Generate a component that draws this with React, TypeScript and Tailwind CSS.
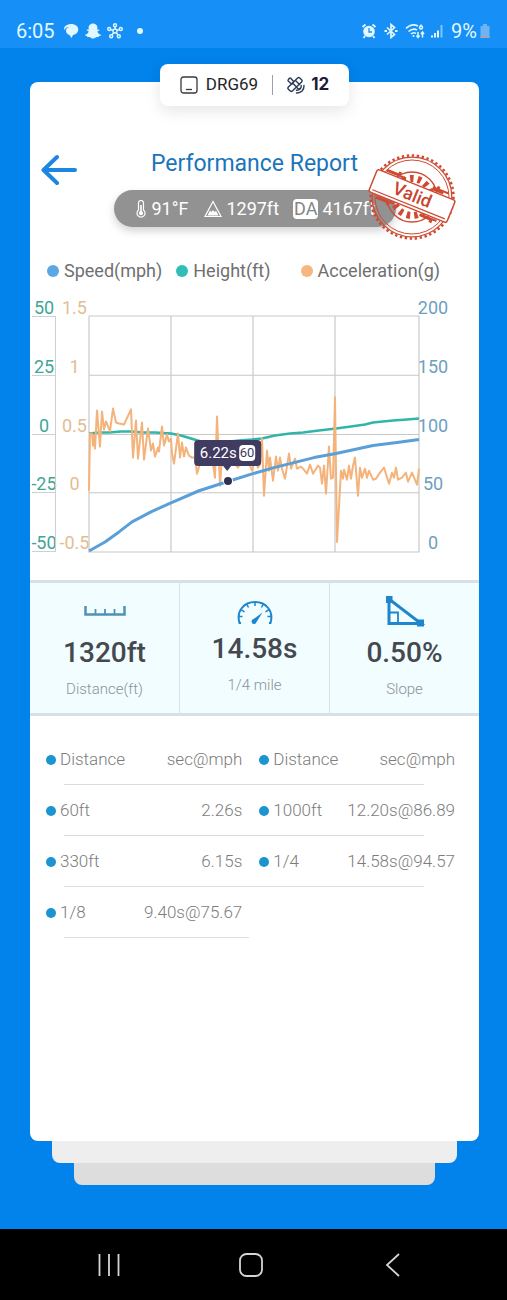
import type { ReactNode } from 'react';
import { FaSnapchatGhost } from 'react-icons/fa';

const speed = '0,234 16,225 30,215 43,205 62,195 82,186 110,174 138,165 164,157 185,151 201,147 225,141 247,137 284,129 308,126 330,123';

const height =
  '0,117 10,116 20,116 32,115 42,115 54,116 66,116 82,117 92,119 102,122 112,125 122,127 150,124 163,123 173,122 186,119 201,117 214,116 230,114 247,112 262,110 276,108 284,106 304,104 318,103 330,102';

const acceleration =
  '0,174 1,117 3,117 4,129 5,119 6,132 8,94 11,130 13,95 15,113 17,105 21,115 24,92 27,106 30,107 35,108 42,93 44,141 47,104 49,142 53,106 55,143 59,112 62,134 64,127 66,140 69,131 70,135 73,110 75,129 78,118 80,125 82,122 83,137 85,147 89,117 91,141 93,126 95,140 97,131 100,139 103,141 106,141 108,157 111,147 118,144 123,141 126,161 128,100 131,169 133,141 143,144 149,151 154,141 159,144 163,154 166,142 169,151 171,147 173,122 175,179 178,134 180,154 181,141 184,164 187,140 189,154 191,141 193,152 196,162 200,137 202,152 206,142 208,152 212,150 214,152 218,157 221,148 224,157 229,149 231,151 233,167 235,149 237,177 240,130 242,162 244,161 246,81 248,225 252,154 254,162 255,153 258,163 260,149 262,162 264,149 266,141 269,179 271,151 273,161 276,152 278,161 280,154 284,163 287,162 291,156 295,151 300,167 303,156 305,161 307,151 309,163 313,161 317,156 319,165 323,156 328,168 330,152';

const legend = [
  { label: 'Speed(mph)', dot: 'bg-[#5ba7e3]', spacing: 'mr-3.5' },
  { label: 'Height(ft)', dot: 'bg-[#31bdb8]', spacing: 'mr-[30px]' },
  { label: 'Acceleration(g)', dot: 'bg-[#f6b67e]', spacing: '' },
];

const splits = [
  ['60ft', '2.26s', '1000ft', '12.20s@86.89'],
  ['330ft', '6.15s', '1/4', '14.58s@94.57'],
  ['1/8', '9.40s@75.67', '', ''],
];

function StatusBar() {
  return (
    <header className="flex h-12 items-center justify-between bg-[#1690f6] pt-3.5 pr-4 pl-4 text-[#e2f8ff]">
      <div className="flex items-center gap-1.5">
        <span className="mr-0.5 text-xl">6:05</span>
        <svg className="h-4 w-4" viewBox="0 0 16 16" fill="currentColor">
          <path d="M4 2c3-1.500 7-1.200 9.500.8 2.600 2.200 2.200 6.200-.5 8-1 .7-2 1-3 1.200L8.500 15 6.500 12C4 11.500 3 9.500 3 7.500c0-2 1.500-3.500 4-3.800C4.500 3.500 2.500 4.500 1.800 7 .2 5.500 1.500 3 4 2z" />
        </svg>
        <FaSnapchatGhost className="h-4 w-4" />
        <svg className="h-4 w-4" viewBox="0 0 16 16" fill="none" stroke="currentColor" strokeWidth="1.400">
          <circle cx="8" cy="8" r="2" />
          <circle cx="8" cy="2.200" r="1.500" />
          <circle cx="2.200" cy="6" r="1.500" />
          <circle cx="13.800" cy="6" r="1.500" />
          <circle cx="4.200" cy="13.300" r="1.500" />
          <circle cx="11.800" cy="13.300" r="1.500" />
          <path d="M8 3.500V6M3.500 6.500l2.600.8M12.500 6.500l-2.600.8M5 12l1.800-2.400M11 12L9.200 9.600" />
        </svg>
        <span className="ml-2 h-1.5 w-1.5 rounded-full bg-current" />
      </div>
      <div className="flex items-center gap-1.5">
        <svg className="h-4 w-4" viewBox="0 0 16 16">
          <circle cx="8" cy="8.500" r="5.800" fill="currentColor" />
          <path d="M1.500 4l3-2.500M14.500 4l-3-2.500M4 13l-1.500 1.800M12 13l1.500 1.800" stroke="currentColor" strokeWidth="1.800" />
          <path d="M8 5v4h3" fill="none" stroke="#1690f6" strokeWidth="1.300" />
        </svg>
        <svg className="h-4 w-4" viewBox="0 0 16 16" fill="none" stroke="currentColor" strokeWidth="1.700">
          <path d="M4 4.500l7.500 7L8 14.500v-13l3.500 3L4 11.500" />
          <path d="M1.500 8h2.500M12 8h2.500" strokeWidth="2" />
        </svg>
        <svg className="h-4 w-5" viewBox="0 0 20 16" fill="none" stroke="currentColor" strokeWidth="1.500">
          <path d="M1 5.500c4-4 8-4.500 12-2.500M3.500 8.500c3-2.500 6-3 8.500-1.500M6 11c1.500-1.500 3.500-1.500 5-.5" />
          <circle cx="8.500" cy="13" r="1" fill="currentColor" stroke="none" />
          <circle cx="16" cy="4.500" r="1.500" />
          <path d="M16 1.500v2M13 9v5M11.500 12.500L13 14.500l1.500-2M17.500 14.500V9.500M16 11l1.500-2 1.500 2" />
        </svg>
        <svg className="h-4 w-3" viewBox="0 0 12 16" stroke="currentColor" strokeWidth="2">
          <path d="M1 14.500v-2M4 14.500v-4.500M7 14.500v-7" />
          <path d="M10.500 14.500V2" opacity=".5" />
        </svg>
        <div className="ml-0.5 flex items-center gap-0.5">
          <span className="text-xl">9%</span>
          <svg className="h-4 w-3" viewBox="0 0 12 16">
            <path d="M1.500 3H4V1h4v2h2.500v12h-9z" fill="#6db4f0" />
            <path d="M1.500 13h9v2h-9z" fill="#a5a0bb" />
          </svg>
        </div>
      </div>
    </header>
  );
}

function DeviceTag() {
  return (
    <div className="relative z-10 -mb-6 flex h-[42px] items-center self-center rounded-lg bg-white px-5 text-[17px] text-[#252528] shadow-[0_5px_16px_rgba(0,0,0,0.10)]">
      <svg className="mr-2 h-[18px] w-[18px]" viewBox="0 0 18 18" fill="none" stroke="#3a3a3d" strokeWidth="1.300">
        <rect x="1" y="1" width="16" height="16" rx="2.500" />
        <path d="M6 13.500h6" />
      </svg>
      <span>DRG69</span>
      <span className="mx-3.5 h-5 w-px bg-gray-400" />
      <svg className="mr-1.5 h-[18px] w-[18px]" viewBox="0 0 18 18" fill="none" stroke="#2c3a55" strokeWidth="1.400" strokeLinejoin="round" strokeLinecap="round">
        <rect x="-8" y="-2.800" width="16" height="5.600" rx="1.500" transform="translate(8 8.500) rotate(-45)" />
        <path d="M6.800 5.700L4 2.500c-.6-.6-1.200-.6-1.800 0L1.500 3.500c-.6.600-.6 1.200 0 1.800L4.800 8.200M5.500 7l3.800 3.800M8.500 4.500l4 4M9.800 11.500l1 1c.6.600 1.200.6 1.800 0" />
        <path d="M14.200 9.500c.3 3-1.700 5-4.700 4.800M17 9.500c.2 4.700-2.800 7.700-7.500 7.500" />
      </svg>
      <span className="font-['Inter',sans-serif] font-bold text-[#1c1c3c]">12</span>
    </div>
  );
}

function ValidStamp() {
  return (
    <svg className="absolute -top-[37px] -right-[62px] h-[90px] w-[90px]" viewBox="0 0 90 90" role="img" aria-label="Valid">
      <g fill="none" stroke="#cf4a32">
        <circle cx="44" cy="44" r="41.500" strokeWidth="2.500" strokeDasharray="2.400 2.600" />
        <circle cx="44" cy="44" r="39.800" strokeWidth="1.300" />
        <circle cx="44" cy="44" r="37" strokeWidth="1" />
        <circle cx="44" cy="44" r="25" strokeWidth="1.300" />
        <circle cx="44" cy="44" r="18.500" strokeWidth="7" strokeDasharray="3.500 4.200" />
      </g>
      <g transform="rotate(22 44 43)">
        <path d="M11 27h12v-2h3v3h6v2H11zM60 26h4v-2h3v2h10v2h-5v2H60zM11 56h19v2h-4v3h-3v-2h-12zM58 56h18v2h-4v3h-3v-2H58z" fill="#cf4a32" />
        <rect x="2" y="31" width="84" height="24" rx="2" fill="#fff" stroke="#cf4a32" strokeWidth="1.500" />
        <path d="M5 52h78" stroke="#cf4a32" strokeWidth="1.300" />
        <text x="44" y="48" textAnchor="middle" fontSize="18" fontWeight="500" fill="#c8452f">
          Valid
        </text>
      </g>
    </svg>
  );
}

function Conditions() {
  return (
    <div className="relative mt-2.5 flex h-[37px] w-[282px] items-center self-center rounded-full bg-[#929292] pl-5 text-lg text-white shadow-[0_4px_8px_rgba(0,0,0,0.18)]">
      <svg className="mr-1 h-[18px] w-3.5" viewBox="1 0 14 18" fill="none" stroke="currentColor" strokeWidth="1.200">
        <path d="M5.500 10V3a2.500 2.500 0 0 1 5 0v7a4 4 0 1 1-5 0z" />
        <path d="M8 5v8" strokeWidth="1.600" />
        <circle cx="8" cy="13.200" r="1.500" fill="currentColor" />
      </svg>
      <span>91°F</span>
      <svg className="mr-1 ml-4 h-[18px] w-[18px]" viewBox="0 0 18 18">
        <path d="M9 1.500L17 16.500H1z" fill="none" stroke="currentColor" strokeWidth="1.200" />
        <path d="M9 5l5.500 10.500h-11L6 10.500l1.500 1.500L9 10l1.500 2 1.500-1z" fill="currentColor" />
      </svg>
      <span>1297ft</span>
      <span className="mr-1 ml-3.5 rounded-sm bg-white px-px leading-5 text-[#858585]">DA</span>
      <span>4167ft</span>
      <ValidStamp />
    </div>
  );
}

function AxisLabels({ labels, className }: { labels: string[]; className: string }) {
  return (
    <div className={`flex shrink-0 flex-col justify-between text-center text-lg leading-[17px] ${className}`}>
      {labels.map((label) => (
        <span key={label} className="flex h-[18px] justify-center whitespace-nowrap">
          {label}
        </span>
      ))}
    </div>
  );
}

function Chart() {
  return (
    <div className="mt-4 mr-8 ml-0.5 flex h-[253px]">
      <AxisLabels
        labels={['50', '25', '0', '-25', '-50']}
        className="relative w-6 text-[#3fa697] before:absolute before:top-[17px] before:right-0 before:bottom-0 before:w-px before:bg-[#cfcfcf] *:border-b *:border-[#cfcfcf]"
      />
      <AxisLabels labels={['1.5', '1', '0.5', '0', '-0.5']} className="w-[33px] pl-1 text-[#e3bd93]" />
      <div className="relative mt-[17px] min-w-0 flex-1">
        <svg className="h-full w-full overflow-visible" viewBox="0 0 330 235" preserveAspectRatio="none" fill="none" strokeLinejoin="round">
          <path d="M0 0H330V235H0zM0 59H330M0 118H330M0 176H330M82 0V235M164 0V235M246 0V235" stroke="#c8c8c8" strokeWidth="1.200" />
          <polyline points={height} stroke="#32b5a9" strokeWidth="2.500" />
          <polyline points={acceleration} stroke="#f4b37b" strokeWidth="2" />
          <polyline points={speed} stroke="#5a9fd8" strokeWidth="3" />
        </svg>
        <span className="absolute top-[70%] left-[42%] h-2 w-2 -translate-x-1/2 -translate-y-1/2 rounded-full bg-[#2e3150] ring-1 ring-white" />
        <div className="absolute top-[124px] left-[42%] flex h-[26px] -translate-x-1/2 items-center gap-0.5 rounded-sm bg-[#403b60] px-1.5 text-[15px] text-white after:absolute after:top-full after:left-1/2 after:-translate-x-1/2 after:border-x-4 after:border-t-[5px] after:border-x-transparent after:border-t-[#403b60]">
          <span>6.22s</span>
          <span className="rounded-sm bg-white px-px text-[13px] leading-4 text-[#403b60]">60</span>
        </div>
      </div>
      <AxisLabels labels={['200', '150', '100', '50', '0']} className="w-7 text-[#6d9fc0]" />
    </div>
  );
}

function Stat({ icon, value, label }: { icon: ReactNode; value: string; label: string }) {
  return (
    <div className="flex flex-1 flex-col items-center border-r border-[#d5e3e6] last:border-r-0">
      {icon}
      <strong className="text-[28px] leading-8 font-medium text-[#45494f]">{value}</strong>
      <span className="mt-2.5 text-[15px] leading-5 font-light text-[#8b9296]">{label}</span>
    </div>
  );
}

function Stats() {
  return (
    <section className="mt-7 flex h-[136px] border-y-[3px] border-[#d4e2e7] bg-[#f1fdff]">
      <Stat
        value="1320ft"
        label="Distance(ft)"
        icon={
          <svg className="mt-[22px] mb-5 h-3 w-[42px]" viewBox="0 0 42 12" fill="none" stroke="#5092b5">
            <path d="M1.500 1v8.500h39V1" strokeWidth="2.500" />
            <path d="M11.500 4v5M21 4v5M30.500 4v5" strokeWidth="1.800" />
          </svg>
        }
      />
      <Stat
        value="14.58s"
        label="1/4 mile"
        icon={
          <svg className="mt-[17px] mb-2 h-[25px] w-9" viewBox="0 0 36 25" fill="none" stroke="#1d86cc" strokeWidth="2">
            <path d="M4 23H2.500C-1 11 7 2 18 2s19 9 15.500 21H32" />
            <path d="M18 2v4M10 4.500l1.500 3M26 4.500l-1.500 3M4.500 10l3 1.800M31.500 10l-3 1.800M2 16.500h3.500M34 16.500h-3.500" strokeWidth="1.500" />
            <path d="M25.500 12.500l-6 9.500a2.500 2.500 0 1 1-3-3z" fill="#1d86cc" stroke="none" />
          </svg>
        }
      />
      <Stat
        value="0.50%"
        label="Slope"
        icon={
          <svg className="mt-3 mb-2.5 h-8 w-10" viewBox="0 0 40 32" fill="none" stroke="#1d86cc">
            <path d="M4 4v24.500h32z" strokeWidth="3" />
            <path d="M4 17.500h9v10" strokeWidth="1.800" />
            <path d="M1 1h6.500v7H1zM32 24.500h7v7h-7z" fill="#1d86cc" stroke="none" />
          </svg>
        }
      />
    </section>
  );
}

function Bullet() {
  return <span className="mr-1 inline-block h-2.5 w-2.5 rounded-full bg-[#1b94d0]" />;
}

function SplitTable() {
  const line = 'after:absolute after:bottom-0 after:left-[18px] after:h-px after:bg-[#dcdcdc]';
  return (
    <table className="mt-[18px] mr-6 ml-4 table-fixed text-[17px] font-light text-[#7c7c7c]">
      <colgroup>
        <col className="w-[22%]" />
        <col className="w-[26%]" />
        <col className="w-[24%]" />
        <col className="w-[28%]" />
      </colgroup>
      <thead>
        <tr className="relative h-[51px]">
          <th scope="col" className={`text-left font-light whitespace-nowrap after:right-[31px] ${line}`}><Bullet />Distance</th>
          <th scope="col" className="text-right font-light">sec@mph</th>
          <th scope="col" className="pl-[17px] text-left font-light whitespace-nowrap"><Bullet />Distance</th>
          <th scope="col" className="text-right font-light">sec@mph</th>
        </tr>
      </thead>
      <tbody>
        {splits.map(([distance, time, nextDistance, nextTime]) => (
          <tr key={distance} className="relative h-[51px]">
            <td className={`whitespace-nowrap ${nextDistance ? 'after:right-[31px]' : 'after:right-[206px]'} ${line}`}><Bullet />{distance}</td>
            <td className="text-right">{time}</td>
            <td className="pl-[17px] whitespace-nowrap">{nextDistance && <><Bullet />{nextDistance}</>}</td>
            <td className="text-right">{nextTime}</td>
          </tr>
        ))}
      </tbody>
    </table>
  );
}

function NavBar() {
  return (
    <nav className="flex h-[71px] items-center justify-between bg-black pr-[102px] pl-[97px] text-[#d4d4d4]">
      <button type="button" aria-label="Recent apps">
        <svg className="h-6 w-6" viewBox="0 0 24 24" stroke="currentColor" strokeWidth="1.800">
          <path d="M2.500 1v22M12 1v22M21.500 1v22" />
        </svg>
      </button>
      <button type="button" aria-label="Home">
        <svg className="h-6 w-6" viewBox="0 0 24 24" fill="none" stroke="currentColor" strokeWidth="1.800">
          <rect x="1" y="1" width="22" height="22" rx="6.500" />
        </svg>
      </button>
      <button type="button" aria-label="Back">
        <svg className="h-6 w-6" viewBox="0 0 24 24" fill="none" stroke="currentColor" strokeWidth="1.800">
          <path d="M18 1L6 12l12 11" />
        </svg>
      </button>
    </nav>
  );
}

export default function App() {
  return (
    <div className="flex min-h-screen flex-col bg-[#0282eb] font-['Roboto',sans-serif]">
      <StatusBar />
      <main className="flex flex-1 flex-col pt-4 pr-7 pb-11 pl-[30px]">
        <DeviceTag />
        <article className="flex flex-1 flex-col rounded-lg bg-white">
          <div className="mt-[66px] flex h-8 items-center px-[11px]">
            <button type="button" aria-label="Back" className="mt-3 w-9">
              <svg className="h-8 w-9" viewBox="0 0 36 32" fill="none" stroke="#1b87e3" strokeWidth="4" strokeLinecap="round" strokeLinejoin="round">
                <path d="M34 16H3M16 3L2.500 16 16 29" />
              </svg>
            </button>
            <h1 className="flex-1 pr-9 text-center text-[23px] text-[#1b75bb]">Performance Report</h1>
          </div>
          <Conditions />
          <ul className="mt-8 flex h-6 items-center px-[17px] text-lg text-[#6f6f6f]">
            {legend.map(({ label, dot, spacing }) => (
              <li key={label} className={`flex items-center gap-[5px] whitespace-nowrap ${spacing}`}>
                <span className={`h-3 w-3 rounded-full ${dot}`} />
                {label}
              </li>
            ))}
          </ul>
          <Chart />
          <Stats />
          <SplitTable />
        </article>
        <div className="mx-[22px] h-[22px] rounded-b-lg bg-[#eeeeee]" />
        <div className="mx-11 h-[22px] rounded-b-lg bg-[#dddddd]" />
      </main>
      <NavBar />
    </div>
  );
}
